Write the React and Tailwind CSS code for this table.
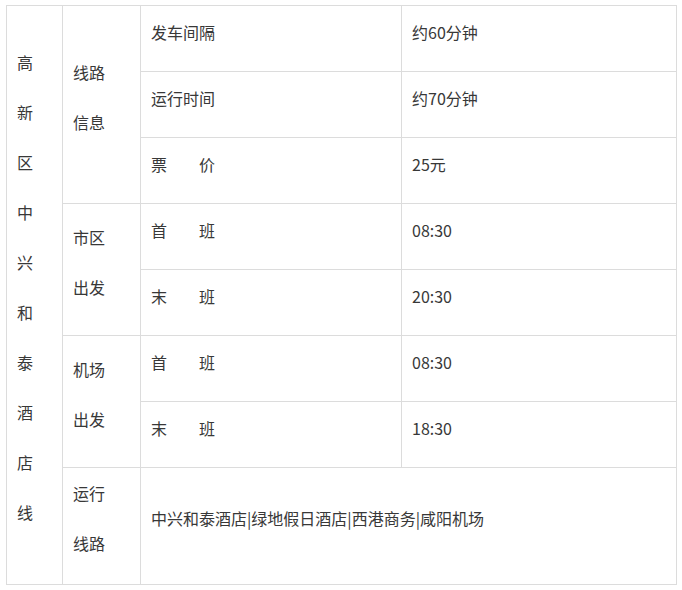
const FONT = "font-['Noto_Sans_CJK_SC','Noto_Sans',sans-serif]";

const cell = 'border border-[#dcdcdc] align-middle px-[10px]';

function Stack({ lines }) {
  return (
    <div className="flex flex-col">
      {lines.map((t, i) => (
        <div key={i} className="leading-[50px]">
          {t}
        </div>
      ))}
    </div>
  );
}

function Row({ label, value }) {
  return (
    <>
      <td className={`${cell} pb-[14px]`}>{label}</td>
      <td className={`${cell} pb-[14px]`}>{value}</td>
    </>
  );
}

export default function App() {
  const title = '高新区中兴和泰酒店线'.split('');

  return (
    <div className={`w-[682px] h-[590px] bg-white pt-[5px] pl-[6px] ${FONT} text-[16px] text-[#383838]`}>
      <table className="table-fixed border-collapse w-[670px]">
        <colgroup>
          <col className="w-[56px]" />
          <col className="w-[78px]" />
          <col className="w-[261px]" />
          <col className="w-[275px]" />
        </colgroup>
        <tbody>
          <tr className="h-[66px]">
            <td rowSpan={8} className={`${cell} pb-4`}>
              <Stack lines={title} />
            </td>
            <td rowSpan={3} className={`${cell} pb-4`}>
              <Stack lines={['线路', '信息']} />
            </td>
            <Row label="发车间隔" value="约60分钟" />
          </tr>
          <tr className="h-[66px]">
            <Row label="运行时间" value="约70分钟" />
          </tr>
          <tr className="h-[66px]">
            <Row label="票　　价" value="25元" />
          </tr>
          <tr className="h-[66px]">
            <td rowSpan={2} className={`${cell} pb-4`}>
              <Stack lines={['市区', '出发']} />
            </td>
            <Row label="首　　班" value="08:30" />
          </tr>
          <tr className="h-[66px]">
            <Row label="末　　班" value="20:30" />
          </tr>
          <tr className="h-[66px]">
            <td rowSpan={2} className={`${cell} pb-4`}>
              <Stack lines={['机场', '出发']} />
            </td>
            <Row label="首　　班" value="08:30" />
          </tr>
          <tr className="h-[66px]">
            <Row label="末　　班" value="18:30" />
          </tr>
          <tr className="h-[116px]">
            <td className={`${cell} pb-4`}>
              <Stack lines={['运行', '线路']} />
            </td>
            <td colSpan={2} className={`${cell} pb-4`}>
              中兴和泰酒店|绿地假日酒店|西港商务|咸阳机场
            </td>
          </tr>
        </tbody>
      </table>
    </div>
  );
}
